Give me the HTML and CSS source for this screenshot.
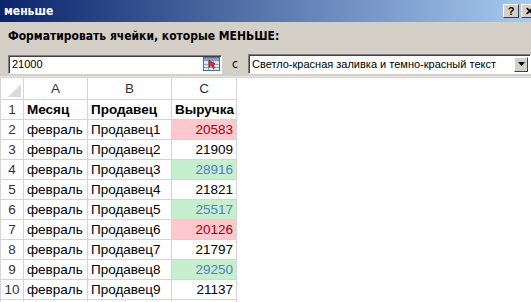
FILE: index.html
```html
<!DOCTYPE html>
<html lang="ru">
<head>
    <meta charset="UTF-8">
    <title>меньше</title>
    <link rel="stylesheet" href="styles.css">
</head>
<body>

    <div class="titlebar">
        <span class="title">меньше</span>
        <div class="title-buttons">
            <span class="tbtn">?</span>
            <span class="tbtn">✕</span>
        </div>
    </div>

    <div class="dialog">
        <div class="prompt">Форматировать ячейки, которые МЕНЬШЕ:</div>
        <div class="fields">
            <div class="value-box">
                <span class="value-text">21000</span>
                <svg class="range-icon" width="17" height="14" viewBox="0 0 17 14">
                    <rect x="0.5" y="0.5" width="16" height="13" fill="#dfe8f6" stroke="#4a6fa5"/>
                    <rect x="1" y="1" width="15" height="3" fill="#7f9fd0"/>
                    <path d="M1 7.5h15M1 10.5h15M5.5 4v9M10.5 4v9" stroke="#8aa3c8" stroke-width="1"/>
                    <path d="M6 3l6 4-2.5 0.5 2.5 3-1.5 1-2.5-3-2 2z" fill="#e03020" stroke="#a01000" stroke-width="0.6"/>
                </svg>
            </div>
            <span class="with">с</span>
            <div class="style-select">
                <span class="select-text">Светло-красная заливка и темно-красный текст</span>
                <span class="drop-btn">
                    <svg width="7" height="4" viewBox="0 0 7 4"><path d="M0 0h7L3.5 4z" fill="#000"/></svg>
                </span>
            </div>
        </div>
    </div>

    <div class="sheet">
        <table class="grid">
            <colgroup>
                <col class="c-rowhead">
                <col class="c-a">
                <col class="c-b">
                <col class="c-c">
            </colgroup>
            <tr class="colhead">
                <th class="corner"><span class="corner-tri"></span></th>
                <th>A</th>
                <th>B</th>
                <th>C</th>
            </tr>
            <tr>
                <td class="rownum">1</td>
                <td class="bold">Месяц</td>
                <td class="bold">Продавец</td>
                <td class="bold">Выручка</td>
            </tr>
            <tr>
                <td class="rownum">2</td>
                <td>февраль</td>
                <td>Продавец1</td>
                <td class="num low">20583</td>
            </tr>
            <tr>
                <td class="rownum">3</td>
                <td>февраль</td>
                <td>Продавец2</td>
                <td class="num">21909</td>
            </tr>
            <tr>
                <td class="rownum">4</td>
                <td>февраль</td>
                <td>Продавец3</td>
                <td class="num high">28916</td>
            </tr>
            <tr>
                <td class="rownum">5</td>
                <td>февраль</td>
                <td>Продавец4</td>
                <td class="num">21821</td>
            </tr>
            <tr>
                <td class="rownum">6</td>
                <td>февраль</td>
                <td>Продавец5</td>
                <td class="num high">25517</td>
            </tr>
            <tr>
                <td class="rownum">7</td>
                <td>февраль</td>
                <td>Продавец6</td>
                <td class="num low">20126</td>
            </tr>
            <tr>
                <td class="rownum">8</td>
                <td>февраль</td>
                <td>Продавец7</td>
                <td class="num">21797</td>
            </tr>
            <tr>
                <td class="rownum">9</td>
                <td>февраль</td>
                <td>Продавец8</td>
                <td class="num high">29250</td>
            </tr>
            <tr>
                <td class="rownum">10</td>
                <td>февраль</td>
                <td>Продавец9</td>
                <td class="num">21137</td>
            </tr>
            <tr>
                <td class="rownum"></td>
                <td></td>
                <td></td>
                <td></td>
            </tr>
        </table>
    </div>

</body>
</html>
```

FILE: styles.css
```css
body {
    margin: 0;
    width: 531px;
    height: 302px;
    overflow: hidden;
    background: #fff;
    font-family: 'DejaVu Sans Condensed', 'DejaVu Sans', sans-serif;
}

/* window title */

.titlebar {
    height: 22px;
    display: flex;
    align-items: center;
    justify-content: space-between;
    padding-left: 4px;
    background: linear-gradient(to right, #0a246a, #a6caf0);
    overflow: hidden;
}

.title {
    color: #fff;
    font-weight: bold;
    font-size: 12px;
}

.title-buttons {
    display: flex;
    gap: 2px;
    margin-right: -6px;
}

.tbtn {
    width: 16px;
    height: 14px;
    box-sizing: border-box;
    background: #d4d0c8;
    border: 1px solid;
    border-color: #fff #404040 #404040 #fff;
    font-family: 'Liberation Sans', sans-serif;
    font-size: 11px;
    font-weight: bold;
    line-height: 12px;
    text-align: center;
    color: #000;
}

/* dialog body */

.dialog {
    background: #d4d0c8;
    height: 55px;
    padding: 7px 0 0 8px;
    box-sizing: border-box;
    border-bottom: 1px solid #e4e2dc;
}

.prompt {
    font-size: 12px;
    font-weight: bold;
    color: #000;
    line-height: 14px;
}

.fields {
    display: flex;
    align-items: center;
    margin-top: 11px;
}

.value-box {
    width: 214px;
    height: 19px;
    box-sizing: border-box;
    display: flex;
    align-items: center;
    justify-content: space-between;
    background: #fff;
    border: 1px solid;
    border-color: #808080 #fff #fff #808080;
    box-shadow: inset 1px 1px #404040;
    padding: 0 1px 0 3px;
}

.value-text,
.select-text {
    font-family: 'Liberation Sans', sans-serif;
    font-size: 11px;
    color: #000;
    white-space: nowrap;
}

.with {
    width: 26px;
    text-align: center;
    font-size: 12px;
    color: #000;
}

.style-select {
    width: 283px;
    height: 20px;
    box-sizing: border-box;
    display: flex;
    align-items: center;
    justify-content: space-between;
    background: #fff;
    border: 1px solid;
    border-color: #808080 #fff #fff #808080;
    box-shadow: inset 1px 1px #404040;
    padding: 0 2px 0 3px;
}

.drop-btn {
    width: 14px;
    height: 15px;
    box-sizing: border-box;
    display: flex;
    align-items: center;
    justify-content: center;
    background: #d4d0c8;
    border: 1px solid;
    border-color: #fff #404040 #404040 #fff;
}

/* worksheet */

.sheet {
    border-top: 1px solid #d8d8d8;
}

.grid {
    width: 237px;
    border-collapse: collapse;
    table-layout: fixed;
    font-family: 'Liberation Sans', sans-serif;
    font-size: 13.5px;
    color: #000;
}

.c-rowhead { width: 23px; }
.c-a { width: 64px; }
.c-b { width: 84px; }
.c-c { width: 65px; }

.grid th,
.grid td {
    height: 19px;
    padding: 0 3px;
    border: 1px solid #d4d4d4;
    white-space: nowrap;
    overflow: hidden;
    line-height: 19px;
}

.grid tr:first-child th {
    border-top: none;
}

.colhead th {
    height: 21px;
    font-weight: normal;
    color: #333;
    text-align: center;
}

.corner {
    position: relative;
    border-left: none;
}

.corner-tri {
    position: absolute;
    right: 2px;
    bottom: 2px;
    width: 0;
    height: 0;
    border-left: 13px solid transparent;
    border-bottom: 13px solid #dadada;
}

.rownum {
    text-align: center;
    color: #333;
    padding: 0;
    border-left: none;
}

.bold {
    font-weight: bold;
}

.num {
    text-align: right;
}

.low {
    background: #ffc7ce;
    color: #9c0006;
}

.high {
    background: #c6efce;
    color: #4f7fc8;
}
```
